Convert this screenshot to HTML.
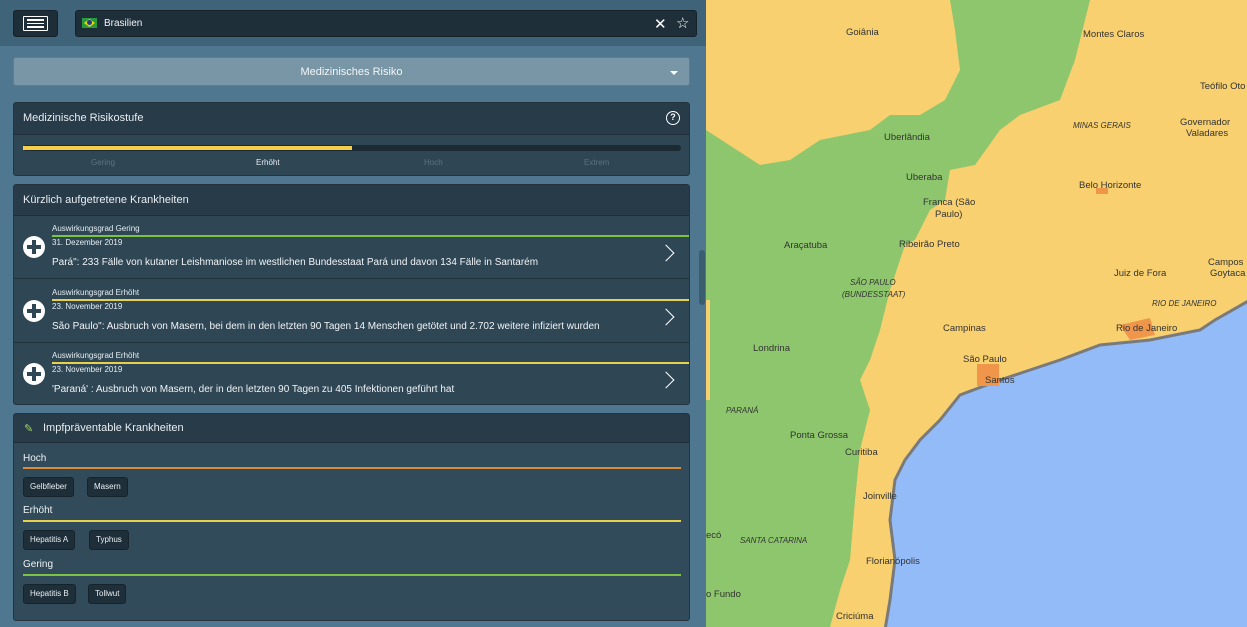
<!DOCTYPE html>
<html><head><meta charset="utf-8"><style>
*{box-sizing:border-box;margin:0;padding:0}
body{width:1247px;height:627px;overflow:hidden;font-family:"Liberation Sans",sans-serif;background:#fff;position:relative}
#panel{position:absolute;left:0;top:0;width:706px;height:627px;background:#4f7890}
#top{position:absolute;left:0;top:0;width:706px;height:46px;background:#3f6479}
.abs{position:absolute}
.card{position:absolute;left:13px;width:677px;background:#2f4654;border:1px solid #24343f;border-radius:3px}
.ch{height:32px;background:#283b48;color:#e8eef2;font-size:11px;line-height:31px;padding-left:9px;border-bottom:1px solid #1f2e38}
.item{position:absolute;left:0;width:675px;height:63px;border-bottom:1px solid #22323c}
.item .t1{position:absolute;left:38px;top:8px;font-size:8px;color:#e6edf1}
.item .ln{position:absolute;left:38px;right:0;top:19px;height:2px}
.item .t2{position:absolute;left:38px;top:22px;font-size:8px;color:#e6edf1}
.item .t3{position:absolute;left:38px;top:41px;font-size:10px;color:#f0f4f6}
.plus{position:absolute;left:9px;top:20px;width:22px;height:22px;border-radius:50%;background:#fff}
.plus:before{content:"";position:absolute;left:9px;top:4px;width:4px;height:14px;background:#2f4654}
.plus:after{content:"";position:absolute;left:4px;top:9px;width:14px;height:4px;background:#2f4654}
.chev{position:absolute;right:17px;top:31px;width:12px;height:12px;border-right:1.3px solid #fff;border-top:1.3px solid #fff;transform:rotate(45deg)}
.lvl{position:absolute;left:9px;font-size:10px;color:#eef2f4}
.bar{position:absolute;left:9px;width:658px;height:2px}
.tag{position:absolute;height:20px;background:#1f2f3a;border:1px solid #17232b;border-radius:3px;font-size:8px;color:#e8eef2;line-height:18px;padding:0 6px}
.map text{font-family:"Liberation Sans",sans-serif;font-size:9.5px;fill:#333;}
</style></head><body>
<div id="panel">
<div id="top"></div>
<div class="abs" style="left:13px;top:10px;width:45px;height:27px;background:#1e2e39;border-radius:3px;border:1px solid #16222a"></div>
<div class="abs" style="left:23px;top:16px;width:25px;height:15px;border:1.5px solid #fff;border-radius:1px"></div>
<div class="abs" style="left:27px;top:19px;width:17px;height:1.5px;background:#fff"></div>
<div class="abs" style="left:27px;top:22.5px;width:17px;height:1.5px;background:#fff"></div>
<div class="abs" style="left:27px;top:26px;width:17px;height:1.5px;background:#fff"></div>
<div class="abs" style="left:75px;top:10px;width:622px;height:27px;background:#1f2f3a;border-radius:3px;border:1px solid #16222a"></div>
<div class="abs" style="left:82px;top:18px;width:15px;height:10px;background:#2a9a3c"></div>
<div class="abs" style="left:84px;top:19px;width:11px;height:8px;background:#f5d800;clip-path:polygon(50% 0,100% 50%,50% 100%,0 50%)"></div>
<div class="abs" style="left:87px;top:20px;width:5px;height:5px;border-radius:50%;background:#1d3c8c"></div>
<div class="abs" style="left:104px;top:18px;font-size:10px;color:#f0f4f6">Brasilien</div>
<div class="abs" style="left:654px;top:15px;font-size:15px;color:#fff">✕</div>
<div class="abs" style="left:676px;top:14px;font-size:15px;color:#fff">☆</div>
<div class="abs" style="left:13px;top:57px;width:677px;height:29px;background:#7896a5;border:1px solid #5f7f8f;border-radius:3px;color:#f3f6f8;font-size:11px;text-align:center;line-height:28px">Medizinisches Risiko</div>
<div class="abs" style="left:670px;top:71px;width:0;height:0;border-left:4px solid transparent;border-right:4px solid transparent;border-top:4px solid #fff"></div>

<div class="card" style="top:102px;height:74px">
<div class="ch">Medizinische Risikostufe</div>
<div class="abs" style="right:9px;top:8px;width:14px;height:14px;border:1.5px solid #fff;border-radius:50%;color:#fff;font-size:9px;text-align:center;line-height:11px;font-weight:bold">?</div>
<div class="abs" style="left:9px;top:42px;width:658px;height:6px;background:#1c2a33;border-radius:3px"></div>
<div class="abs" style="left:9px;top:43px;width:329px;height:4px;background:#f5cf4a"></div>
<div class="abs" style="left:77px;top:55px;font-size:8px;color:#5c7382">Gering</div>
<div class="abs" style="left:242px;top:55px;font-size:8px;color:#e8eef2">Erhöht</div>
<div class="abs" style="left:410px;top:55px;font-size:8px;color:#5c7382">Hoch</div>
<div class="abs" style="left:570px;top:55px;font-size:8px;color:#5c7382">Extrem</div>
</div>

<div class="card" style="top:184px;height:221px">
<div class="ch" style="height:31px">Kürzlich aufgetretene Krankheiten</div>
<div class="item" style="top:31px"><div class="t1">Auswirkungsgrad Gering</div><div class="ln" style="background:#7cc243"></div><div class="t2">31. Dezember 2019</div><div class="t3">Pará": 233 Fälle von kutaner Leishmaniose im westlichen Bundesstaat Pará und davon 134 Fälle in Santarém</div><div class="plus"></div><div class="chev"></div></div>
<div class="item" style="top:95px"><div class="t1">Auswirkungsgrad Erhöht</div><div class="ln" style="background:#e8d04a"></div><div class="t2">23. November 2019</div><div class="t3">São Paulo": Ausbruch von Masern, bei dem in den letzten 90 Tagen 14 Menschen getötet und 2.702 weitere infiziert wurden</div><div class="plus"></div><div class="chev"></div></div>
<div class="item" style="top:158px;border-bottom:none"><div class="t1">Auswirkungsgrad Erhöht</div><div class="ln" style="background:#e8d04a"></div><div class="t2">23. November 2019</div><div class="t3">'Paraná' : Ausbruch von Masern, der in den letzten 90 Tagen zu 405 Infektionen geführt hat</div><div class="plus"></div><div class="chev"></div></div>
</div>

<div class="card" style="top:413px;height:208px;background:#324b5a">
<div class="ch" style="height:29px;line-height:28px;padding-left:29px">Impfpräventable Krankheiten</div>
<div class="abs" style="left:10px;top:8px;font-size:11px;color:#9ed36a">✎</div>
<div class="lvl" style="top:39px">Hoch</div><div class="bar" style="top:53px;background:#d98c3c"></div>
<div class="tag" style="left:9px;top:63px">Gelbfieber</div><div class="tag" style="left:73px;top:63px">Masern</div>
<div class="lvl" style="top:91px">Erhöht</div><div class="bar" style="top:106px;background:#e8d04a"></div>
<div class="tag" style="left:9px;top:116px">Hepatitis A</div><div class="tag" style="left:75px;top:116px">Typhus</div>
<div class="lvl" style="top:145px">Gering</div><div class="bar" style="top:160px;background:#7cc243"></div>
<div class="tag" style="left:9px;top:170px">Hepatitis B</div><div class="tag" style="left:74px;top:170px">Tollwut</div>
</div>
<div class="abs" style="left:699px;top:250px;width:6px;height:55px;background:#3c5d70;border-radius:3px"></div>
</div>

<svg class="map" style="position:absolute;left:0;top:0" width="1247" height="627">
<rect x="706" y="0" width="541" height="627" fill="#f8d06f"/>
<polygon fill="#8dc66c" points="950,0 1090,0 1075,60 1060,100 1020,115 1000,130 975,165 950,170 945,200 930,210 915,240 905,245 890,290 880,330 870,360 860,380 870,410 860,450 855,500 850,560 840,590 830,627 706,627 706,130 760,165 790,160 820,140 870,130 890,115 920,115 945,100 960,70 955,30"/>
<rect x="706" y="300" width="4" height="100" fill="#f8d06f"/>
<polygon fill="#93bbf7" stroke="#7a7a7a" stroke-width="3" points="1250,300 1215,320 1200,330 1150,340 1100,345 1060,360 1030,370 1000,380 960,395 940,420 920,440 905,460 895,480 890,520 895,560 890,600 885,630 1250,630"/>
<rect x="977" y="364" width="22" height="22" fill="#f0964a"/>
<polygon fill="#f0964a" points="1120,325 1150,318 1155,335 1130,340"/>
<rect x="1096" y="188" width="12" height="6" fill="#f0964a"/>
<g>
<text x="846" y="35">Goiânia</text><text x="1083" y="37">Montes Claros</text><text x="1200" y="89">Teófilo Oto</text>
<text x="1180" y="125">Governador</text><text x="1186" y="136">Valadares</text><text x="1073" y="128" font-style="italic" fill="#6b4d6b" style="font-size:8px">MINAS GERAIS</text>
<text x="884" y="140">Uberlândia</text><text x="906" y="180">Uberaba</text><text x="1079" y="188">Belo Horizonte</text>
<text x="923" y="205">Franca (São</text><text x="935" y="217">Paulo)</text><text x="784" y="248">Araçatuba</text><text x="899" y="247">Ribeirão Preto</text>
<text x="850" y="285" font-style="italic" fill="#6b4d6b" style="font-size:8px">SÃO PAULO</text><text x="842" y="297" font-style="italic" fill="#6b4d6b" style="font-size:8px">(BUNDESSTAAT)</text>
<text x="1114" y="276">Juiz de Fora</text><text x="1208" y="265">Campos</text><text x="1210" y="276">Goytaca</text>
<text x="1152" y="306" font-style="italic" fill="#6b4d6b" style="font-size:8px">RIO DE JANEIRO</text><text x="943" y="331">Campinas</text><text x="1116" y="331">Rio de Janeiro</text>
<text x="753" y="351">Londrina</text><text x="963" y="362">São Paulo</text><text x="985" y="383">Santos</text>
<text x="726" y="413" font-style="italic" fill="#6b4d6b" style="font-size:8px">PARANÁ</text><text x="790" y="438">Ponta Grossa</text><text x="845" y="455">Curitiba</text>
<text x="863" y="499">Joinville</text><text x="740" y="543" font-style="italic" fill="#6b4d6b" style="font-size:8px">SANTA CATARINA</text><text x="706" y="538">ecó</text>
<text x="866" y="564">Florianópolis</text><text x="706" y="597">o Fundo</text><text x="836" y="619">Criciúma</text>
</g>
</svg>
</body></html>
